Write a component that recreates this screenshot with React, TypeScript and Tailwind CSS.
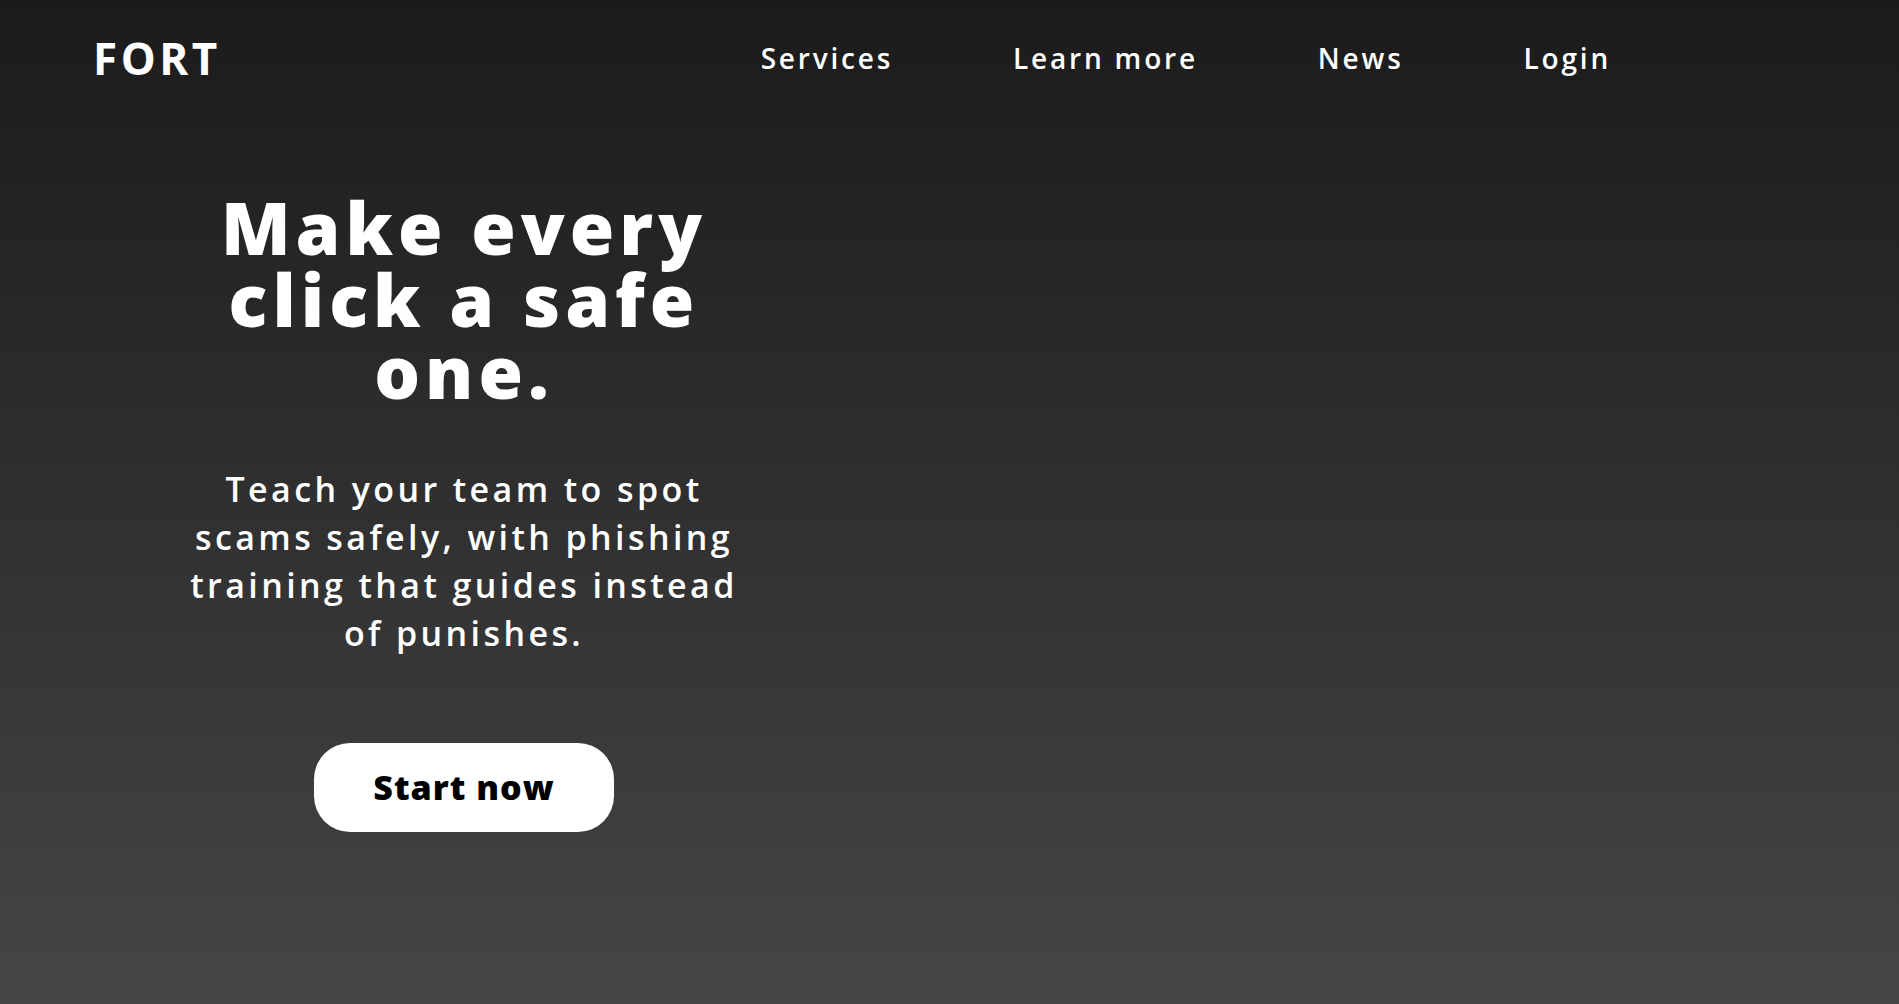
const navLinks = ["Services", "Learn more", "News", "Login"];

const Header = () => {
  return (
    <header className="flex items-center h-[116px] pl-[93px] pr-[288px]">
      <a className="text-[44px] font-bold tracking-[0.08em] text-white leading-none">
        FORT
      </a>
      <nav className="ml-auto flex items-center gap-[120px]">
        {navLinks.map((link) => (
          <a
            key={link}
            className="text-[28px] font-semibold tracking-[0.1em] text-white cursor-pointer"
          >
            {link}
          </a>
        ))}
      </nav>
    </header>
  );
};

const Hero = () => {
  return (
    <section className="flex">
      <div className="ml-[154px] w-[620px] flex flex-col items-center text-center text-white">
        <h1 className="mt-[75px] text-[72px] leading-[72px] font-black tracking-[0.07em]">
          Make every
          <br />
          click a safe
          <br />
          one.
        </h1>
        <p className="mt-[58px] w-[620px] text-[34px] leading-[48px] font-semibold tracking-[0.1em]">
          Teach your team to spot
          <br />
          scams safely, with phishing
          <br />
          training that guides instead
          <br />
          of punishes.
        </p>
        <button className="mt-[86px] w-[300px] h-[89px] rounded-[36px] bg-white text-black text-[34px] font-black tracking-[0.03em]">
          Start now
        </button>
      </div>
    </section>
  );
};

export default function App() {
  return (
    <div
      className="min-h-[1004px] w-full bg-gradient-to-b from-[#1b1b1b] to-[#464646]"
      style={{ fontFamily: '"Open Sans", "Noto Sans", sans-serif' }}
    >
      <Header />
      <Hero />
    </div>
  );
}
